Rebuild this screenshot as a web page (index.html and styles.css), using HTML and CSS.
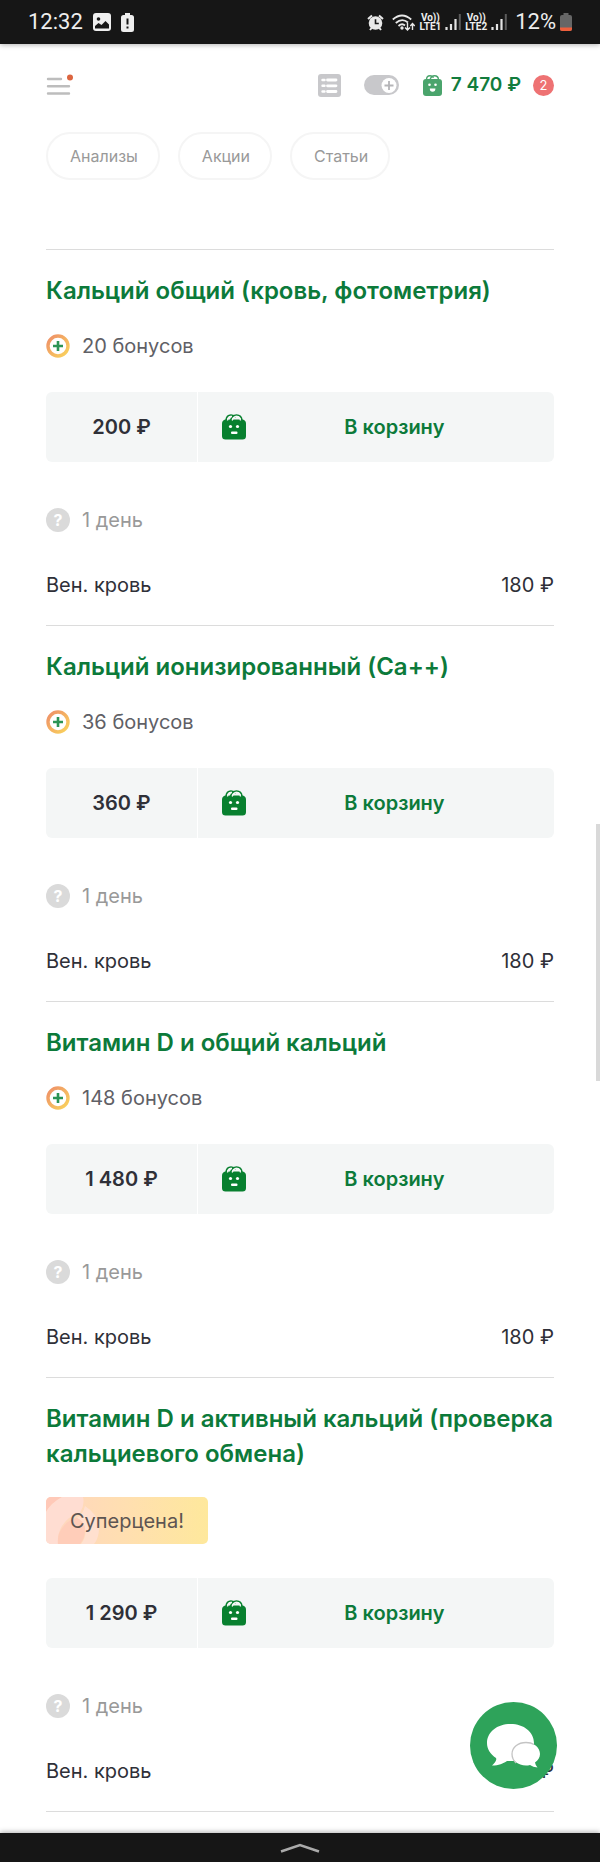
FILE: index.html
```
<!DOCTYPE html>
<html lang="ru">

<head>
    <meta charset="UTF-8">
    <meta name="viewport" content="width=device-width, initial-scale=1.0">
    <title>Анализы</title>
    <link rel="stylesheet" href="styles.css">
</head>

<body>
    <!-- shared icons -->
    <svg class="sprite" aria-hidden="true">
        <defs>
            <linearGradient id="ring" x1="0" y1="0" x2="1" y2="1">
                <stop offset="0" stop-color="#ee8e68" />
                <stop offset="1" stop-color="#fad45c" />
            </linearGradient>
        </defs>
        <symbol id="bag" viewBox="0 0 24 26">
            <path d="M3 5.500h18q3 1 3 4V22q0 3.500-3.500 3.500h-17Q0 25.500 0 22V9.500q0-3 3-4z" fill="currentColor" />
            <path d="M4 6.500Q4.500 1 9 1q3 0 4.500 2.500M8.500 6.500Q10 1 14.500 1q5 0 5.500 5.500" fill="none" stroke="currentColor" stroke-width="1.600" />
            <path d="M5.500 6.500Q6 2.500 10 2.500M10.200 6.500Q11.500 2.500 14.500 2.500q3.500 0 4 4" fill="none" stroke="#f4f6f6" stroke-width="1.300" />
            <circle cx="8.500" cy="12.500" r="1.600" fill="#fff" />
            <circle cx="15.500" cy="12.500" r="1.600" fill="#fff" />
            <rect x="9" y="17.500" width="6.500" height="2.600" rx="1" fill="#fff" />
        </symbol>
        <symbol id="bonus" viewBox="0 0 24 24">
            <circle cx="12" cy="12" r="10" fill="#fff" stroke="url(#ring)" stroke-width="3.400" />
            <path d="M12 7v10M7 12h10" stroke="#2c9455" stroke-width="2.600" />
        </symbol>
        <symbol id="signal" viewBox="0 0 16 17">
            <path d="M1.500 13v3M6 10v6M10.500 5v11" stroke="#e4e4e4" stroke-width="2.200" />
            <path d="M14.800 0v16" stroke="#5c5c5c" stroke-width="2" />
        </symbol>
    </svg>

    <div class="status-bar">
        <div class="status-group">
            <span class="time">12:32</span>
            <svg class="picture-icon" viewBox="0 0 18 18" aria-hidden="true">
                <rect width="18" height="18" rx="3" fill="#eee" />
                <circle cx="5.500" cy="6" r="1.800" fill="#161616" />
                <path d="M2 15.500V13l3.500-3 3 2 4-4 3.500 3.500v4z" fill="#161616" />
            </svg>
            <svg class="alert-icon" viewBox="0 0 13 19" aria-hidden="true">
                <path d="M4 0h5v2h1.500Q13 2 13 4.500v12q0 2.500-2.500 2.500h-8Q0 19 0 16.500v-12Q0 2 2.500 2H4z" fill="#eee" />
                <path d="M6.500 5.500v6M6.500 13.500v2" stroke="#161616" stroke-width="2" />
            </svg>
        </div>
        <div class="status-group right">
            <svg class="alarm-icon" viewBox="0 0 17 17" aria-hidden="true">
                <path d="M1 5L5 1.500M16 5l-4-3.500M3 16l2-2.500M14 16l-2-2.500" stroke="#e8e8e8" stroke-width="2" />
                <circle cx="8.500" cy="9" r="6.800" fill="#e8e8e8" />
                <path d="M8.500 5.200v4.300h3.300" fill="none" stroke="#161616" stroke-width="1.600" />
            </svg>
            <svg class="wifi-icon" viewBox="0 0 23 17" aria-hidden="true">
                <path d="M.8 5.500Q10 -2.500 19.200 5.500M3.800 9Q10 3.500 16 8.500M6.500 12Q10 8.800 13 11.500" fill="none" stroke="#e8e8e8" stroke-width="1.800" />
                <circle cx="10" cy="14" r="1.700" fill="#e8e8e8" />
                <path d="M15.500 9v7M13 13.500l2.500 2.500 2.500-2.500M20.500 16V9.500M18.300 12l2.200-2.500 2.200 2.500" fill="none" stroke="#e8e8e8" stroke-width="1.400" />
            </svg>
            <span class="lte"><span>Vo))</span><span>LTE1</span></span>
            <svg class="signal-icon" aria-hidden="true"><use href="#signal" /></svg>
            <span class="lte"><span>Vo))</span><span>LTE2</span></span>
            <svg class="signal-icon" aria-hidden="true"><use href="#signal" /></svg>
            <span class="percent">12%</span>
            <svg class="battery-icon" viewBox="0 0 12 18" aria-hidden="true">
                <path d="M3.500 0h5v2H10q2 0 2 2v12q0 2-2 2H2q-2 0-2-2V4q0-2 2-2h1.500z" fill="#666" />
                <path d="M0 14.500h12V16q0 2-2 2H2q-2 0-2-2z" fill="#ee5f3c" />
            </svg>
        </div>
    </div>

    <header class="header">
        <button class="menu-button" aria-label="Меню">
            <svg viewBox="0 0 27 23" aria-hidden="true">
                <path d="M2 5h13M2 12.300h21M2 19.500h21" stroke="#bdbdbd" stroke-width="2.400" stroke-linecap="round" />
                <circle cx="24" cy="3.500" r="3" fill="#dc6540" />
            </svg>
        </button>
        <button class="list-button" aria-label="Список">
            <svg viewBox="0 0 23 23" aria-hidden="true">
                <rect width="23" height="23" rx="3" fill="#c8c8cb" />
                <path d="M9.500 6h8.500M9.500 11.800h8.500M9.500 17.500h8.500" stroke="#fff" stroke-width="2.800" stroke-linecap="round" />
                <path d="M4.500 6h2M4.500 11.800h2M4.500 17.500h2" stroke="#fff" stroke-width="2.400" stroke-linecap="round" />
            </svg>
        </button>
        <label class="toggle">
            <input type="checkbox" aria-label="Крупный вид">
            <svg viewBox="0 0 35 20" aria-hidden="true">
                <circle cx="25" cy="10.500" r="7.500" fill="#fff" />
                <path d="M25 6v9M20.500 10.500h9" stroke="#b5b5b8" stroke-width="1.800" />
            </svg>
        </label>
        <a class="cart" href="#">
            <svg class="cart-bag" viewBox="0 0 19 21" aria-hidden="true">
                <path d="M3.500 5Q3.500 .8 7 .8q2.500 0 3.500 2M7 5Q8 .8 11.500 .8q4 0 4 4.200" fill="none" stroke="#4aa46c" stroke-width="1.400" />
                <rect y="4" width="19" height="17" rx="3" fill="#4aa46c" />
                <circle cx="6.500" cy="9.800" r="1.300" fill="#fff" />
                <circle cx="12.500" cy="9.800" r="1.300" fill="#fff" />
                <path d="M6.800 13.500h5.600q0 3.300-2.800 3.300t-2.800-3.300z" fill="#fff" />
            </svg>
            <span class="cart-sum">7 470 ₽</span>
            <span class="cart-count">2</span>
        </a>
    </header>

    <nav class="chips">
        <a class="chip" href="#">Анализы</a>
        <a class="chip" href="#">Акции</a>
        <a class="chip" href="#">Статьи</a>
    </nav>

    <main class="list">
        <article class="card">
            <h2><a href="#">Кальций общий (кровь, фотометрия)</a></h2>
            <div class="bonus">
                <svg class="icon" aria-hidden="true"><use href="#bonus" /></svg>
                <span>20 бонусов</span>
            </div>
            <div class="buy">
                <span class="price">200 ₽</span>
                <button class="buy-button">
                    <svg class="bag" aria-hidden="true"><use href="#bag" /></svg>
                    <span>В корзину</span>
                </button>
            </div>
            <div class="term">
                <button class="help" aria-label="Срок выполнения">?</button>
                <span>1 день</span>
            </div>
            <div class="sample"><span>Вен. кровь</span><span>180 ₽</span></div>
        </article>

        <article class="card">
            <h2><a href="#">Кальций ионизированный (Ca++)</a></h2>
            <div class="bonus">
                <svg class="icon" aria-hidden="true"><use href="#bonus" /></svg>
                <span>36 бонусов</span>
            </div>
            <div class="buy">
                <span class="price">360 ₽</span>
                <button class="buy-button">
                    <svg class="bag" aria-hidden="true"><use href="#bag" /></svg>
                    <span>В корзину</span>
                </button>
            </div>
            <div class="term">
                <button class="help" aria-label="Срок выполнения">?</button>
                <span>1 день</span>
            </div>
            <div class="sample"><span>Вен. кровь</span><span>180 ₽</span></div>
        </article>

        <article class="card">
            <h2><a href="#">Витамин D и общий кальций</a></h2>
            <div class="bonus">
                <svg class="icon" aria-hidden="true"><use href="#bonus" /></svg>
                <span>148 бонусов</span>
            </div>
            <div class="buy">
                <span class="price">1 480 ₽</span>
                <button class="buy-button">
                    <svg class="bag" aria-hidden="true"><use href="#bag" /></svg>
                    <span>В корзину</span>
                </button>
            </div>
            <div class="term">
                <button class="help" aria-label="Срок выполнения">?</button>
                <span>1 день</span>
            </div>
            <div class="sample"><span>Вен. кровь</span><span>180 ₽</span></div>
        </article>

        <article class="card">
            <h2><a href="#">Витамин D и активный кальций (проверка кальциевого обмена)</a></h2>
            <div class="super-price">
                <svg viewBox="0 0 60 47" aria-hidden="true">
                    <path d="M0 0h16Q5 6 0 15z" fill="#ffc9b8" />
                    <path d="M16 0h21q2 8-3 16Q22 19 16 29q-5 8-4 18H0V15Q5 6 16 0z" fill="#ffddd2" />
                    <path d="M39 9q14 9 14 22 0 10-5 16H35q6-8 4-16-1-7-8-10 6-4 8-12z" fill="#ffe0cf" />
                    <path d="M12 47q-1-10 5-17 6-8 14-9 8 4 8 12 0 8-5 14z" fill="#ffcdb9" />
                </svg>
                <span>Суперцена!</span>
            </div>
            <div class="buy">
                <span class="price">1 290 ₽</span>
                <button class="buy-button">
                    <svg class="bag" aria-hidden="true"><use href="#bag" /></svg>
                    <span>В корзину</span>
                </button>
            </div>
            <div class="term">
                <button class="help" aria-label="Срок выполнения">?</button>
                <span>1 день</span>
            </div>
            <div class="sample"><span>Вен. кровь</span><span>180 ₽</span></div>
        </article>
    </main>

    <footer class="nav-bar">
        <svg viewBox="0 0 40 10" aria-hidden="true">
            <path d="M1 8.500L20 2l19 6.500" fill="none" stroke="#aaa" stroke-width="2.600" />
        </svg>
    </footer>

    <!-- floating elements -->
    <div class="scroll-thumb"></div>
    <button class="chat-button" aria-label="Чат">
        <svg viewBox="0 0 87 87" aria-hidden="true">
            <path d="M40.500 22C27 22 17 30 17 41c0 6 3 11 9 15 1 2-1 5-4 7.500 7 0 11-2 15-4.500 16 1 27-6 27-18 0-11-10-19-23.500-19z" fill="#fff" />
            <path d="M56 40.500c-8 0-14 5-14 11.500s6 11.500 14 11.500q2 0 4-.5 3 2 7.500 2.500-2-2-2.500-5c3-2 5-5 5-8.500 0-6.500-6-11.500-14-11.500z" fill="#fff" />
            <path d="M46 61c-3-3-4-6-4-9 0-6.500 6-11.500 14-11.500 3 0 6 .6 8 2" fill="none" stroke="#c4c4c4" stroke-width="1.300" />
        </svg>
    </button>
</body>

</html>
```
FILE: styles.css
```
* {
    box-sizing: border-box;
}

body {
    position: relative;
    display: flex;
    flex-direction: column;
    min-height: 100vh;
    margin: 0;
    background-color: #fff;
    color: #2f3038;
    font-family: Inter, sans-serif;
    font-size: 20px;
    line-height: 24px;
}

a {
    color: inherit;
    text-decoration: none;
}

button {
    padding: 0;
    border: none;
    background: none;
    color: inherit;
    font: inherit;
    cursor: pointer;
}

svg {
    display: block;
    flex-shrink: 0;
}

.sprite {
    position: absolute;
    width: 0;
    height: 0;
}

/* system status bar */
.status-bar {
    display: flex;
    justify-content: space-between;
    align-items: center;
    height: 44px;
    padding: 0 28px;
    background-color: #161616;
    box-shadow: 0 1px 5px rgba(0, 0, 0, 0.3);
    color: #eee;
    font-family: Roboto, sans-serif;
    font-size: 22px;
}

.status-group {
    display: flex;
    align-items: center;
    gap: 10px;
}

.status-group.right {
    gap: 4px;
}

.picture-icon {
    width: 18px;
    height: 18px;
}

.alert-icon {
    width: 13px;
    height: 19px;
}

.alarm-icon {
    width: 17px;
    height: 17px;
    margin-right: 4px;
}

.wifi-icon {
    width: 23px;
    height: 17px;
}

.lte {
    display: flex;
    flex-direction: column;
    align-items: center;
    font-size: 10px;
    font-weight: 700;
    line-height: 9px;
}

.signal-icon {
    width: 16px;
    height: 17px;
}

.percent {
    margin-left: 4px;
}

.battery-icon {
    width: 12px;
    height: 18px;
}

/* page header */
.header {
    display: flex;
    align-items: center;
    padding: 29px 46px 0;
}

.menu-button {
    margin-right: auto;
}

.menu-button svg {
    width: 27px;
    height: 23px;
}

.list-button svg {
    width: 23px;
    height: 23px;
}

.toggle {
    display: grid;
    margin: 0 24px 0 23px;
}

.toggle input,
.toggle svg {
    grid-area: 1 / 1;
    width: 35px;
    height: 20px;
}

.toggle input {
    appearance: none;
    margin: 0;
    border-radius: 10px;
    background-color: #c8c8cb;
}

.cart {
    display: flex;
    align-items: center;
}

.cart-bag {
    width: 19px;
    height: 21px;
}

.cart-sum {
    margin: 0 12px 0 9px;
    color: #127c3d;
    font-size: 19px;
    font-weight: 600;
}

.cart-count {
    width: 21px;
    height: 21px;
    border-radius: 50%;
    background-color: #ee7273;
    color: #fff;
    font-size: 13px;
    line-height: 21px;
    text-align: center;
}

.chips {
    display: flex;
    gap: 18px;
    padding: 35px 46px 0;
}

.chip {
    padding: 10px 20px 10px 22px;
    border: 2px solid #f5f5f5;
    border-radius: 24px;
    color: #999;
    font-size: 16px;
}

/* list of tests */
.list {
    flex: 1;
    padding: 69px 46px 20px;
}

.card {
    padding: 23px 0 28px;
    border-top: 1px solid #dcdcdc;
}

.card:last-child {
    border-bottom: 1px solid #dcdcdc;
}

.card h2 {
    margin: 0;
    color: #0c7a3a;
    font-size: 24px;
    font-weight: 600;
    line-height: 35px;
}

.bonus,
.term {
    display: flex;
    align-items: center;
    gap: 12px;
}

.bonus {
    margin-top: 26px;
    color: #606066;
}

.icon {
    width: 24px;
    height: 24px;
}

.super-price {
    display: grid;
    align-items: center;
    width: fit-content;
    height: 47px;
    margin-top: 26px;
    overflow: hidden;
    border-radius: 5px;
    background: linear-gradient(90deg, #ffd5c0, #ffdfb0 50%, #fee89c);
    color: #5d5552;
}

.super-price svg,
.super-price span {
    grid-area: 1 / 1;
}

.super-price svg {
    width: 60px;
    height: 47px;
}

.super-price span {
    padding: 0 24px;
}

.buy {
    display: flex;
    gap: 1px;
    height: 70px;
    margin-top: 34px;
    overflow: hidden;
    border-radius: 6px;
    font-weight: 600;
}

.price {
    width: 151px;
    background-color: #f4f6f6;
    line-height: 70px;
    text-align: center;
}

.buy-button {
    display: flex;
    flex: 1;
    align-items: center;
    padding: 0 11px 0 24px;
    background-color: #f4f6f6;
    color: #0c7a3a;
}

.buy-button span {
    flex: 1;
}

.bag {
    width: 24px;
    height: 26px;
    color: #08802f;
}

.term {
    margin-top: 46px;
    color: #999;
}

.help {
    width: 24px;
    height: 24px;
    border-radius: 50%;
    background-color: #dadada;
    color: #fff;
    font-size: 16px;
    font-weight: 700;
    line-height: 24px;
}

.sample {
    display: flex;
    justify-content: space-between;
    margin-top: 41px;
}

.nav-bar {
    display: flex;
    justify-content: center;
    align-items: center;
    height: 29px;
    background-color: #161616;
    box-shadow: 0 -1px 5px rgba(0, 0, 0, 0.3);
}

.nav-bar svg {
    width: 40px;
    height: 10px;
}

.scroll-thumb {
    position: absolute;
    top: 824px;
    right: 0;
    width: 4px;
    height: 257px;
    background-color: #d9d9d9;
}

.chat-button {
    position: fixed;
    right: 43px;
    bottom: 73px;
    width: 87px;
    height: 87px;
    border-radius: 50%;
    background-color: #2ea35a;
}
```
